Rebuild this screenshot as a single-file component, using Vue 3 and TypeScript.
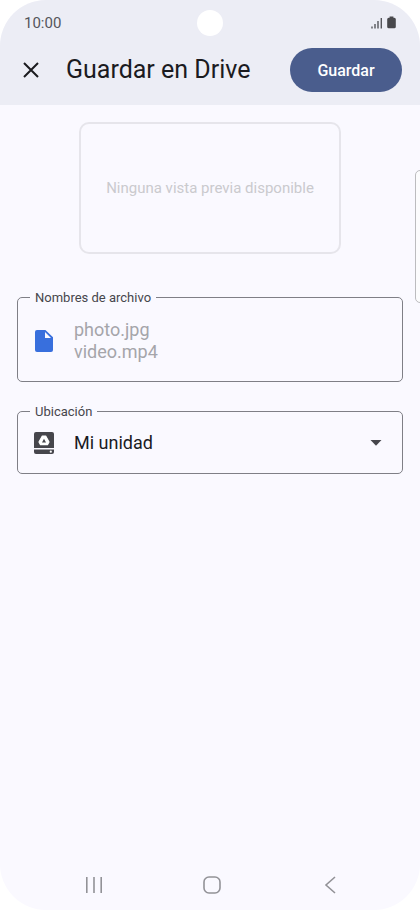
<script setup lang="ts">
import { ref } from 'vue'

const fileNames = ref<string>('photo.jpg\nvideo.mp4')
const locations: string[] = ['Mi unidad']
const location = ref<string>(locations[0])
</script>

<template>
  <div class="screen">
    <header class="top">
      <div class="status">
        <span>10:00</span>
        <span class="camera"></span>
        <span class="status-icons">
          <svg width="12" height="12" viewBox="0 0 12 12" aria-hidden="true">
            <path d="M1 9.5V11.5M4 7V11.5M7 4V11.5M10.3 1V11.5" stroke="#55555b" stroke-width="1.4" fill="none" />
          </svg>
          <svg width="9" height="13" viewBox="0 0 9 13" aria-hidden="true">
            <path d="M2.6 0.5h3.8v1.2h.9q1.5 0 1.5 1.5v7.6q0 1.5-1.5 1.5H1.7q-1.5 0-1.5-1.5V3.2q0-1.5 1.5-1.5h.9z" fill="#48484c" />
          </svg>
        </span>
      </div>
      <div class="bar">
        <button class="close" type="button" aria-label="Cerrar">
          <svg width="16" height="16" viewBox="0 0 16 16" aria-hidden="true">
            <path d="M1 1L15 15M15 1L1 15" stroke="#1b1b1f" stroke-width="2" fill="none" />
          </svg>
        </button>
        <h1>Guardar en Drive</h1>
        <button class="save" type="button">Guardar</button>
      </div>
    </header>

    <main>
      <div class="preview">Ninguna vista previa disponible</div>

      <fieldset class="field files">
        <legend><label for="names">Nombres de archivo</label></legend>
        <svg class="icon" width="20" height="24" viewBox="0 0 20 24" aria-hidden="true">
          <path d="M3 1h8.4L19 8.3V21q0 2-2 2H3q-2 0-2-2V3q0-2 2-2z" fill="#386fdd" />
          <path d="M11 3v6h6z" fill="#faf9ff" />
        </svg>
        <textarea id="names" v-model="fileNames" rows="2" spellcheck="false"></textarea>
      </fieldset>

      <fieldset class="field place">
        <legend><label for="location">Ubicación</label></legend>
        <svg class="icon" width="20" height="22" viewBox="0 0 20 22" aria-hidden="true">
          <path d="M2 0h16q2 0 2 2v14H0V2q0-2 2-2z" fill="#46464c" />
          <path d="M0 17.5h20V20q0 2-2 2H2q-2 0-2-2z" fill="#46464c" />
          <path d="M8.3 4h3.4l3.3 6-1.5 2.6h-7L5 10z" fill="#fff" stroke="#fff" stroke-width="1.2" stroke-linejoin="round" />
          <path d="M10 6.8l2 3.6H8z" fill="#46464c" />
          <circle cx="16.8" cy="19.7" r="1.1" fill="#fff" />
        </svg>
        <select id="location" v-model="location">
          <option v-for="item in locations" :key="item">{{ item }}</option>
        </select>
        <svg class="arrow" width="12" height="6" viewBox="0 0 12 6" aria-hidden="true">
          <path d="M0.5 0h11L6 5.8z" fill="#46464c" />
        </svg>
      </fieldset>
    </main>

    <nav>
      <button type="button" aria-label="Recientes">
        <svg width="18" height="18" viewBox="0 0 18 18" aria-hidden="true">
          <path d="M1.8 1v16M9 1v16M16.2 1v16" />
        </svg>
      </button>
      <button type="button" aria-label="Inicio">
        <svg width="18" height="18" viewBox="0 0 18 18" aria-hidden="true">
          <rect x="1" y="1" width="16" height="16" rx="5" />
        </svg>
      </button>
      <button type="button" aria-label="Atrás">
        <svg width="18" height="18" viewBox="0 0 18 18" aria-hidden="true">
          <path d="M14 1L5 9l9 8" />
        </svg>
      </button>
    </nav>

    <div class="edge-handle"></div>
  </div>
</template>

<style>
body {
  background: #fff;
}
</style>

<style scoped>
.screen {
  position: relative;
  box-sizing: border-box;
  display: flex;
  flex-direction: column;
  min-height: 100vh;
  overflow: hidden;
  border-radius: 46px;
  background: #faf9ff;
  color: #1b1b1f;
  font-family: Roboto, "Liberation Sans", sans-serif;
}

button {
  padding: 0;
  border: 0;
  background: none;
  font: inherit;
  cursor: pointer;
}

svg {
  display: block;
  flex: none;
}

.top {
  padding-bottom: 13px;
  background: #ecedf5;
}

.status {
  display: grid;
  grid-template-columns: 1fr auto 1fr;
  align-items: center;
  height: 45px;
  padding: 0 24px;
  color: #55555b;
  font-size: 15px;
}

.camera {
  width: 26px;
  height: 26px;
  border-radius: 50%;
  background: #fff;
}

.status-icons {
  display: flex;
  justify-content: flex-end;
  align-items: center;
  gap: 4px;
}

.bar {
  display: flex;
  align-items: center;
  padding: 3px 18px 0 23px;
}

.close {
  margin-right: 27px;
}

h1 {
  flex: 1;
  margin: 0;
  font-size: 25px;
  font-weight: 400;
  line-height: 32px;
  white-space: nowrap;
}

.save {
  width: 112px;
  height: 44px;
  border-radius: 22px;
  background: #4a5d8d;
  color: #fff;
  font-size: 16px;
  font-weight: 500;
}

main {
  flex: 1;
  display: flex;
  flex-direction: column;
  padding: 17px 17px 0;
}

.preview {
  display: flex;
  align-items: center;
  justify-content: center;
  align-self: center;
  box-sizing: border-box;
  width: 68%;
  height: 132px;
  margin-bottom: 34px;
  border: 2px solid #e6e5eb;
  border-radius: 10px;
  color: #cacace;
  font-size: 15px;
}

.field {
  display: flex;
  align-items: center;
  min-width: 0;
  margin: 0 0 20px;
  border: 1px solid #7f7f86;
  border-radius: 5px;
}

.files {
  padding: 13px 20px 18px 12px;
}

.place {
  padding: 12px 20px 19px 12px;
}

legend {
  padding: 2px 5px 0;
  color: #46464c;
  font-size: 13px;
  line-height: 16px;
}

.icon {
  margin: 0 20px 0 4px;
}

textarea,
select {
  flex: 1;
  min-width: 0;
  margin: 0;
  padding: 0;
  border: 0;
  outline: 0;
  appearance: none;
  background: none;
  color: #1b1b1f;
  font-family: inherit;
  font-size: 18px;
  line-height: 22px;
}

textarea {
  height: 44px;
  overflow: hidden;
  resize: none;
  color: #a5a5aa;
}

.arrow {
  pointer-events: none;
}

nav {
  display: flex;
  justify-content: space-between;
  padding: 0 81px 16px 85px;
}

nav svg {
  fill: none;
  stroke: #929297;
  stroke-width: 1.6;
}

.edge-handle {
  position: absolute;
  top: 170px;
  right: -5px;
  box-sizing: border-box;
  width: 10px;
  height: 133px;
  border: 1px solid #bcbcbf;
  border-radius: 5px;
  background: #fcfcfd;
}
</style>
